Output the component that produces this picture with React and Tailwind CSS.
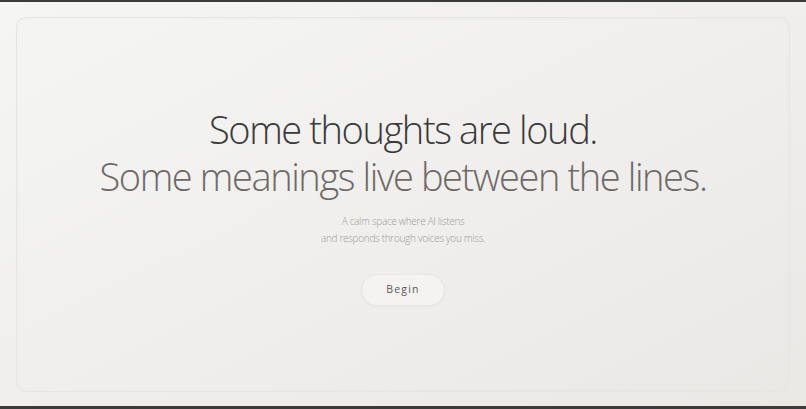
export default function App() {
  return (
    <div
      className="h-[409px] w-full overflow-hidden bg-[#3b3b3b] pt-[2px] pb-[3px]"
      style={{ fontFamily: '"Open Sans", "Noto Sans", sans-serif' }}
    >
      <div className="flex h-full flex-col bg-gradient-to-br from-[#f5f5f4] via-[#f0efed] to-[#eae8e5] px-[16px] pt-[15px] pb-[14px]">
        <div className="flex flex-1 flex-col items-center rounded-[10px] border border-[#e6e5e2] shadow-[inset_0_0_6px_rgba(0,0,0,0.025)]">
          <h1 className="mt-[88px] text-center text-[38px] font-light leading-[47px] tracking-[-1.4px]">
            <span className="block text-[#3a3a3a]">Some thoughts are loud.</span>
            <span className="block text-[#6e6966]">Some meanings live between the lines.</span>
          </h1>
          <p className="mt-[13px] text-center text-[10px] font-light leading-[17px] tracking-[-0.3px] text-[#9e9b98]">
            A calm space where AI listens
            <br />
            and responds through voices you miss.
          </p>
          <button className="mt-[27px] h-[32px] w-[84px] rounded-full border border-[#e8e7e4] bg-[#f4f3f1] text-[10.5px] tracking-[1.2px] text-[#5b5856] shadow-[0_1px_3px_rgba(0,0,0,0.04)]">
            Begin
          </button>
        </div>
      </div>
    </div>
  );
}
